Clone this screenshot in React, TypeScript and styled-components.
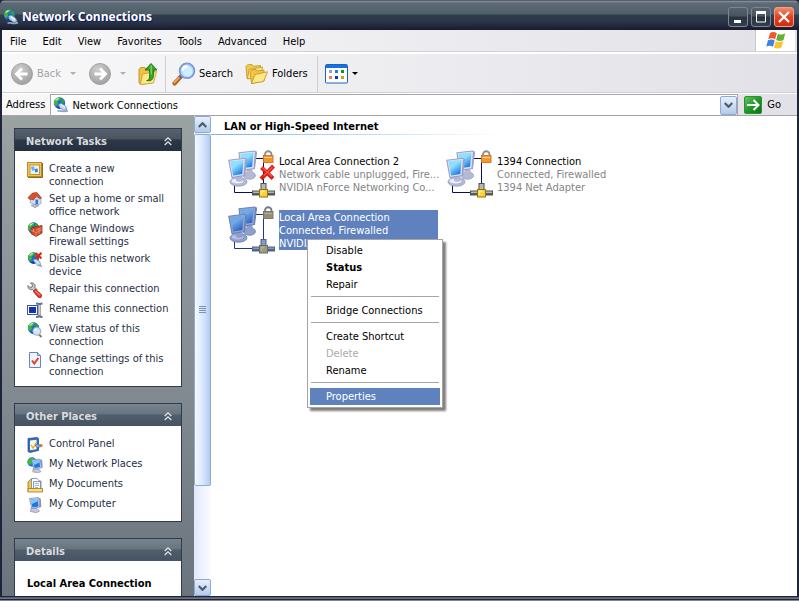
import React from "react";
import styled, { createGlobalStyle, css } from "styled-components";

const Global = createGlobalStyle`
  *, *::before, *::after { box-sizing: border-box; }
  html, body { margin: 0; height: 100%; }
  body {
    font-family: "DejaVu Sans Condensed", "Noto Sans", sans-serif;
    font-size: 11px;
    line-height: 13px;
    color: #000;
    overflow: hidden;
  }
  button, input {
    font: inherit;
    color: inherit;
    border: 0;
    padding: 0;
    margin: 0;
    background: none;
  }
  svg { display: block; flex: none; }
  ul, h2, h3, p { margin: 0; padding: 0; font: inherit; list-style: none; }
  a { color: inherit; text-decoration: none; }
`;

/* ---------- icons ---------- */

const Globe = () => (
  <g>
    <circle cx="6.5" cy="6" r="5.7" fill="#2468d0" />
    <path d="M1 5C2 1.500 5 0 8 .5L7 3 4.500 4.500 5 7 3 9C1.500 8 .8 6.500 1 5Z" fill="#3eb83c" />
    <path d="M9 1.500l2.500 2-.5 3-2.500-1-1-2Z" fill="#2ca536" />
    <path d="M2 3.500C3 1.500 5 .7 6.500 1L4 3.500Z" fill="#c8f3a8" />
    <path d="M3 10.500a5.700 5.700 0 0 0 8.500-2L9 9Z" fill="#0c3a92" />
  </g>
);

const GlobeCable = () => (
  <svg width="16" height="16" viewBox="0 0 16 16" aria-hidden="true">
    <Globe />
    <path d="M5.500 7.500L8 6l4.500 3 1.500 3-3 1.500-4.500-3Z" fill="#c3d9ef" stroke="#64819f" strokeWidth=".7" />
    <path d="M4.500 14.300c3-1.600 5.500 1.400 10.500-.5M12 12l2.500 2" fill="none" stroke="#8ba6c6" strokeWidth="1.600" />
    <path d="M8 7.500l4 3" stroke="#fff" />
  </svg>
);

const Icon16 = ({ children }: { children: React.ReactNode }) => (
  <svg width="16" height="16" viewBox="0 0 16 16" aria-hidden="true">
    {children}
  </svg>
);

const Monitor = () => (
  <g>
    <path d="M4 11l6 .5 2.500 2.700-3 1.500-6-1.200Z" fill="#c3c6dc" stroke="#8a8eab" strokeWidth=".7" />
    <path d="M2.500 1.500L11.500.6l1.300 9.600-8 1.300Z" fill="#e3e7f4" stroke="#7e88a8" strokeWidth=".8" />
    <path d="M3.700 2.500l7-.7.9 7.600-6.200 1Z" fill="#1f74e0" />
    <path d="M3.700 2.500l7-.7.3 2.500-6.700 3Z" fill="#7fc8ff" />
    <path d="M12 .8l1.800 1 .5 8-1.500.7Z" fill="#8b8fb0" />
  </g>
);

const IconCreate = () => (
  <Icon16>
    <rect x=".5" y=".5" width="14" height="14" fill="#f0c455" stroke="#b98a2a" />
    <rect x="3" y="3" width="9.500" height="9.500" fill="#e9f3fb" stroke="#c29532" />
    <path d="M4 5l3-.8.5 4-2.500.5Z" fill="#62aef0" />
    <path d="M7.500 7l3-.6.6 3.400-2.800.6Z" fill="#3f7fd6" />
    <path d="M15.500 1v14.500H1" fill="none" stroke="#8c6a22" />
  </Icon16>
);
const IconHome = () => (
  <Icon16>
    <path d="M4 13.500l4-1.500 4 1.500-4 2.200Z" fill="#b9bccb" stroke="#85889a" strokeWidth=".6" />
    <path d="M3 6l8-1 3 1v5.500l-4 1.500-6.500-2Z" fill="#cfe1f8" stroke="#8495b5" strokeWidth=".7" />
    <path d="M8.500 7.500h2.600V12l-2.600.5Z" fill="#3274cf" />
    <path d="M1 5.500L5.500 1 10 .5 14.500 6l-2 .8L9.500 4 6.500 8 2 7Z" fill="#d8532a" stroke="#93341a" strokeWidth=".6" />
  </Icon16>
);
const IconFirewall = () => (
  <Icon16>
    <Globe />
    <path d="M4 6l11-2.500V11L9 14.500 4 11.500Z" fill="#d4482a" stroke="#8f2613" strokeWidth=".8" />
    <path d="M4 8.500l5 2 6-2.700M6.500 7v2.500M12 6v3M9 10.500v4M9 8l6-2.300M12 9.500V12" fill="none" stroke="#f3a180" strokeWidth=".7" />
  </Icon16>
);
const IconDisable = () => (
  <Icon16>
    <Globe />
    <path d="M6 8l3-1 4 3 .5 3-3 .5Z" fill="#cfe0f2" stroke="#6b88a8" strokeWidth=".7" />
    <path d="M11 13l4 1.500" stroke="#8ca6c6" strokeWidth="1.500" />
    <path d="M8.500 1l6 5.500M14.500.8L8.500 6.500" stroke="#e2250c" strokeWidth="2.200" />
  </Icon16>
);
const IconRepair = () => (
  <Icon16>
    <path d="M1 3.500L3 5.500l2-.5.500-2L3.500 1C6.500.3 8.800 2.500 8 5.500l2 2-2 2.500-2.500-2.500C2.500 8.300.4 6 1 3.500Z" fill="#c6c6ca" stroke="#65656c" strokeWidth=".9" />
    <path d="M8.300 7l6.500 6-.8 2.500-2.600-.1L6.300 9.500Z" fill="#e33a1e" stroke="#9c210f" strokeWidth=".8" />
    <path d="M8.500 9l4.500 4.500" stroke="#ffab93" />
  </Icon16>
);
const IconRename = () => (
  <Icon16>
    <rect x=".5" y="3.500" width="10" height="9" fill="#fff" stroke="#4a5680" />
    <rect x="2" y="5" width="7" height="6" fill="#0a34bd" />
    <path d="M9 1.500c2 0 3 .5 3.500 1 .5-.5 1.500-1 3-1M12.500 2v12M9 15c2 0 3-.5 3.500-1 .5.500 1.500 1 3 1" fill="none" stroke="#68738e" strokeWidth="2.200" />
    <path d="M12.500 3v10" stroke="#d3d8e8" strokeWidth=".9" />
  </Icon16>
);
const IconStatus = () => (
  <Icon16>
    <Globe />
    <path d="M12 12.500l2.500 2.500" stroke="#9a6c3a" strokeWidth="1.800" />
    <circle cx="9.800" cy="9.300" r="4" fill="#c9e9fb" stroke="#8fa9bd" />
    <path d="M7.500 9a2.500 2.500 0 0 1 2.500-2" fill="none" stroke="#fff" strokeWidth="1.200" />
  </Icon16>
);
const IconSettings = () => (
  <Icon16>
    <path d="M2.500.5h8l3 3v12h-11Z" fill="#eef4ff" stroke="#6885bd" />
    <path d="M10.500.5v3h3" fill="#c2d4f2" stroke="#6885bd" />
    <path d="M5 8.500L7.300 11.500l4-5.500" fill="none" stroke="#e7401c" strokeWidth="2" />
  </Icon16>
);
const IconControl = () => (
  <Icon16>
    <path d="M1 1.500l9-1 1.500 1v12L3 15.500l-2-1Z" fill="#2c6fca" stroke="#1e4688" strokeWidth=".7" />
    <path d="M3 3.500l6.500-.8v9.500L3 13.300Z" fill="#fff8d8" />
    <path d="M4 8l2 3 3-5" fill="none" stroke="#e2a52c" strokeWidth="1.300" />
    <path d="M8 8.500l3-2v1.300h2.500V10H11v1.300Z" fill="#8ab0e6" stroke="#315b9f" strokeWidth=".6" />
    <circle cx="14" cy="8.500" r="1.600" fill="#e2703a" />
  </Icon16>
);
const IconPlaces = () => (
  <Icon16>
    <circle cx="5" cy="5" r="4.700" fill="#2f78d8" />
    <path d="M.5 5C1 2 3 .3 6 .5L7 3 4 7 2 8Z" fill="#42b83e" />
    <g transform="translate(2.500 1.500) scale(.92)">
      <Monitor />
    </g>
  </Icon16>
);
const IconDocs = () => (
  <Icon16>
    <path d="M1 5l3-3h3l1 2h6v10.500H1Z" fill="#f1c546" stroke="#9a7420" strokeWidth=".8" />
    <path d="M4.500 1.500H10l2 2v8H4.500Z" fill="#fff" stroke="#6f86b4" strokeWidth=".8" />
    <path d="M6.500 4.500h7v8h-7Z" fill="#f2f7ff" stroke="#6f86b4" strokeWidth=".8" />
    <path d="M8 6.500h4M8 8.500h4M8 10.500h3" stroke="#8ea9d6" strokeWidth=".8" />
    <path d="M1 11.500h14.500v3.500H1Z" fill="#f9dd7a" stroke="#9a7420" strokeWidth=".8" />
  </Icon16>
);
const IconComputer = () => (
  <Icon16>
    <Monitor />
  </Icon16>
);

const RoundArrow = ({ back }: { back?: boolean }) => (
  <svg width="24" height="24" viewBox="0 0 24 24" aria-hidden="true">
    <defs>
      <radialGradient id={back ? "rb" : "rf"} cx=".4" cy=".3" r=".8">
        <stop offset="0" stopColor="#cfcfcf" />
        <stop offset="1" stopColor="#9b9b9b" />
      </radialGradient>
    </defs>
    <circle cx="12" cy="12" r="10.500" fill={`url(#${back ? "rb" : "rf"})`} stroke="#a3a3a3" />
    <path
      d={back ? "M12 6.500L6.500 12l5.500 5.500M7 12h10.500" : "M12 6.500l5.500 5.500-5.500 5.500M17 12H6.500"}
      fill="none"
      stroke="#fff"
      strokeWidth="2.800"
    />
  </svg>
);

const IconUp = () => (
  <svg width="20" height="24" viewBox="0 0 20 24" aria-hidden="true">
    <path d="M1 7.500l1.500-2H7l1 1.500h8.500v3l-3 11L3 22.500 1 21Z" fill="#f0c240" stroke="#c2902a" strokeWidth=".9" />
    <path d="M4.500 12l14-2.500-3 11.500L2.500 22.500Z" fill="#fde88c" stroke="#d3a335" strokeWidth=".9" />
    <path d="M8.500 18.500c3 0 3.500-2.500 3-10.500H7l6-6.500L19 8h-3.500c.4 8-.5 12-7 10.500Z" fill="#35a62c" stroke="#17701a" strokeWidth=".9" />
    <path d="M13.200 3.500v9" stroke="#86dc6c" strokeWidth="1.200" />
  </svg>
);

const IconSearch = () => (
  <svg width="24" height="24" viewBox="0 0 24 24" aria-hidden="true">
    <path d="M9 14.500L2.500 21.500" stroke="#b86524" strokeWidth="4.200" strokeLinecap="round" />
    <path d="M8.500 14L2.500 20.500" stroke="#f7a75c" strokeWidth="1.800" strokeLinecap="round" />
    <path d="M10 12.500L7.500 15.500" stroke="#5968a0" strokeWidth="3" />
    <circle cx="15" cy="8.800" r="7.400" fill="#a8dcfa" stroke="#8197cf" strokeWidth="1.700" />
    <circle cx="15.500" cy="9.500" r="5" fill="#cdeeff" />
    <path d="M10.500 8c.6-2.500 2.500-3.600 4.500-3.600" fill="none" stroke="#fff" strokeWidth="2.200" strokeLinecap="round" />
  </svg>
);

const IconFolders = () => (
  <svg width="24" height="24" viewBox="0 0 24 24" aria-hidden="true">
    <g stroke="#c99727" strokeWidth=".9" strokeLinejoin="round">
      <path d="M2 16.500L1 4.500 2.500 2.800l4.500-.3L8.500 4.300l7-.8v10Z" fill="#f2cb4c" />
      <path d="M2.500 17L4 7.500 17.500 5l-2 9Z" fill="#fdeb98" />
      <path d="M6.500 21.500L5 9.500 6.500 8l4.500-.5L12.500 9l6.500-1v11Z" fill="#f0c544" />
      <path d="M6.500 21.500l3.500-9L22.500 9.800l-4 9.700Z" fill="#fde88a" />
    </g>
  </svg>
);

const IconViews = () => (
  <svg width="23" height="20" viewBox="0 0 23 20" aria-hidden="true">
    <rect x=".5" y=".5" width="22" height="18.500" rx="1" fill="#fff" stroke="#1464c8" />
    <rect x="1" y="1" width="21" height="3" fill="#1a70dc" />
    <rect x="4" y="6" width="3" height="3" fill="#9a9ccc" />
    <rect x="10" y="6" width="3" height="3" fill="#1e7de0" />
    <rect x="16" y="6" width="3" height="3" fill="#0c9a1c" />
    <rect x="4" y="12" width="3" height="3" fill="#fb7a50" />
    <rect x="10" y="12" width="3" height="3" fill="#12379e" />
    <rect x="16" y="12" width="3" height="3" fill="#d0a012" />
  </svg>
);

const Caret = ({ color }: { color: string }) => (
  <svg width="6" height="3" viewBox="0 0 6 3" aria-hidden="true">
    <path d="M0 0h6L3 3Z" fill={color} />
  </svg>
);

const Chevron = ({ up }: { up?: boolean }) => (
  <svg width="9" height="6" viewBox="0 0 9 6" aria-hidden="true">
    <path d={up ? "M.7 5L4.500 1.200 8.300 5" : "M.7 1L4.500 4.800 8.300 1"} fill="none" stroke="#4b5a6e" strokeWidth="2.200" />
  </svg>
);

const DoubleChevron = () => (
  <svg width="8" height="9" viewBox="0 0 8 9" aria-hidden="true">
    <path d="M.7 4L4 .9 7.300 4M.7 8L4 4.900 7.300 8" fill="none" stroke="#e4e6e8" strokeWidth="1.300" />
  </svg>
);

const WindowsFlag = () => (
  <svg width="20" height="19" viewBox="0 0 20 19" aria-hidden="true">
    <path d="M4 2c2.500-1.500 4.500-1.300 6.800.2L9 8.500C7 7 4.800 7 2.300 8.200Z" fill="#ee5a2a" />
    <path d="M11.800 2.700c2.300 1.200 4.500 1.200 7.400-.2L17.500 9c-2.700 1.300-5 1.200-7.300 0Z" fill="#62b235" />
    <path d="M2 9.300c2.500-1.200 4.700-1.200 6.700.3L7 15.800c-2-1.400-4.300-1.400-6.800-.2Z" fill="#3d83e0" />
    <path d="M9.800 10.200c2.300 1.200 4.700 1.200 7.400-.1l-1.800 6.500c-2.500 1.300-5 1.300-7.400 0Z" fill="#fbc32c" />
  </svg>
);

const IconGo = () => (
  <svg width="18" height="18" viewBox="0 0 18 18" aria-hidden="true">
    <defs>
      <linearGradient id="go" x1="0" y1="0" x2="1" y2="1">
        <stop offset="0" stopColor="#6cc468" />
        <stop offset=".5" stopColor="#1f9a26" />
        <stop offset="1" stopColor="#0a7012" />
      </linearGradient>
    </defs>
    <rect x=".5" y=".5" width="17" height="17" rx="1.500" fill="url(#go)" stroke="#2f8f36" />
    <path d="M3 9h11M9.500 4l5 5-5 5" fill="none" stroke="#fff" strokeWidth="2" />
  </svg>
);

const ConnectionIcon = ({ selected, broken }: { selected?: boolean; broken?: boolean }) => {
  const p = selected
    ? { a: "#6fa9e6", b: "#2f66c4", frame: "#6b82b8", bezel: "#93a5d2", base: "#8e9fcb", baseHi: "#b4c1e2", lock: "#9a8d78", lockEdge: "#7a7468", lockHi: "#b8ae9b", shackle: "#6f7890", wire: "#23357e", hub: "#4c6288", hubLight: "#8199c4", core: "#9c9c7c", coreEdge: "#686c60", coreHi: "#b4b49c" }
    : { a: "#8fe0ff", b: "#1f7ce8", frame: "#98a0c4", bezel: "#dde1f2", base: "#b5b9d3", baseHi: "#eceef8", lock: "#f3962d", lockEdge: "#d0741c", lockHi: "#ffd089", shackle: "#8d8d90", wire: "#0b0b60", hub: "#4f5452", hubLight: "#b4bab4", core: "#fccf3c", coreEdge: "#9a7208", coreHi: "#ffef9a" };
  const id = selected ? "scr-selected" : "scr-normal";
  return (
    <svg width="48" height="48" viewBox="0 0 48 48" aria-hidden="true">
      <defs>
        <linearGradient id={id} x1="0" y1="0" x2=".6" y2="1">
          <stop offset="0" stopColor={p.a} />
          <stop offset=".45" stopColor={p.a} />
          <stop offset="1" stopColor={p.b} />
        </linearGradient>
      </defs>
      <path d="M26 8.500h9.500V34M6.500 34v8.500H25" fill="none" stroke={p.wire} />
      <ellipse cx="21.500" cy="25.500" rx="6" ry="3.800" fill={p.base} stroke={p.frame} strokeWidth=".8" />
      <path d="M18 18.500h6l1.500 6-6 1.500Z" fill={p.base} />
      <path d="M11 2.800L26.500 1l2 1L26.500 18.500 13 20.500Z" fill={p.bezel} stroke={p.frame} strokeWidth="1.100" />
      <path d="M12.300 4l13.200-1.500-1.400 14.300L14 18.200Z" fill={`url(#${id})`} />
      <path d="M27 2l1.500.3-2 16-1 .2Z" fill={p.frame} />
      <ellipse cx="10.500" cy="31.800" rx="8.500" ry="4.400" fill={p.base} stroke={p.frame} strokeWidth=".9" />
      <ellipse cx="9.500" cy="31" rx="6" ry="2.600" fill={p.baseHi} />
      <path d="M7.500 25.500h6.500l1.500 4.500c-2 2-5 2-7.500 1Z" fill={p.base} />
      <path d="M.8 10.300l15.700-2 2 1.200-2 16-12.500 2Z" fill={p.bezel} stroke={p.frame} strokeWidth="1.100" />
      <path d="M2.300 11.600l13.300-1.700-1.300 14-9.100 1.500Z" fill={`url(#${id})`} />
      <path d="M17 9.400l1.500.3-2 16-1 .2Z" fill={p.frame} />
      <path d="M37 6V4.500a3 3 0 0 1 6.500 0V6" fill="none" stroke={p.shackle} strokeWidth="1.800" />
      <rect x="35.500" y="5.500" width="9.500" height="7" fill={p.lock} stroke={p.lockEdge} strokeWidth=".9" />
      <path d="M36.500 7.500h7.500" stroke={p.lockHi} />
      <rect x="33" y="33.500" width="5" height="6" fill={p.hubLight} stroke={p.hub} />
      <rect x="24.500" y="41" width="22" height="4" fill={p.hubLight} stroke={p.hub} />
      <path d="M25 44h21" stroke={p.hub} strokeWidth="1.800" />
      <rect x="31.500" y="39.500" width="8" height="7.500" fill={p.core} stroke={p.coreEdge} />
      <path d="M33.500 45v-3.500h3" fill="none" stroke={p.coreHi} strokeWidth="1.300" />
      {broken && <path d="M33.500 17.500L45 28.500M45.500 16L33 29" stroke="#d9221a" strokeWidth="4" />}
      {broken && <path d="M34.500 17.500l9.500 9M44.500 17L36 25.500" stroke="#f5533c" strokeWidth="1.400" />}
    </svg>
  );
};

/* ---------- frame ---------- */

const Frame = styled.div`
  display: flex;
  flex-direction: column;
  height: 100vh;
  background: #20243a;
`;
const TitleBar = styled.header`
  display: flex;
  align-items: center;
  gap: 3px;
  flex: none;
  height: 30px;
  padding: 4px 5px 0 3px;
  border-radius: 5px 5px 0 0;
  color: #fff;
  background: linear-gradient(#20263a 0, #8b95a2 1px, #5e6b77 3px, #4f5e69 14px, #303e4f 15px, #2a3447 22px, #171c2e 30px);
`;
const Title = styled.h1`
  flex: 1;
  margin: 0;
  font-family: "Open Sans", "Noto Sans", sans-serif;
  font-size: 12px;
  line-height: 16px;
  font-weight: 700;
  text-shadow: 1px 1px 0 #10206a;
`;
const Caption = styled.div`
  display: flex;
  gap: 3px;
`;
const CaptionButton = styled.button<{ $close?: boolean }>`
  display: grid;
  place-items: center;
  width: 20px;
  height: 20px;
  border: 1px solid ${(p) => (p.$close ? "#f2a08c" : "#7d8794")};
  border-radius: 3px;
  background: ${(p) =>
    p.$close
      ? "linear-gradient(#f08a6c, #e8401c 50%, #d22c0c)"
      : "linear-gradient(#55616d, #48545f 45%, #27323f 50%, #333f4e)"};
`;
const Client = styled.div`
  display: flex;
  flex-direction: column;
  flex: 1;
  min-height: 0;
  margin: 0 2px;
  background: #fff;
`;
const BottomEdge = styled.div`
  flex: none;
  height: 5px;
  border-top: 1px solid #20243a;
  border-bottom: 1px solid #85868c;
  background: linear-gradient(#4a5568, #6a7686 50%, #20243a 50%);
`;

const bar = css`
  display: flex;
  flex: none;
  background: linear-gradient(90deg, #f8f8f9, #e2e1e7);
`;
const MenuBar = styled.nav`
  ${bar}
  height: 24px;
  border-bottom: 2px solid #fff;
  box-shadow: inset 0 -1px 0 #d0cfd3;
`;
const MenuItems = styled.div`
  display: flex;
  flex: 1;
  align-items: center;
`;
const MenuButton = styled.button`
  padding: 0 8px;
`;
const Brand = styled.div`
  display: grid;
  place-items: center;
  width: 42px;
  margin-bottom: 1px;
  border-left: 1px solid #c9c8cc;
  border-right: 2px solid #e2e1e7;
  background: #fff;
`;
const ToolBar = styled.div`
  ${bar}
  align-items: center;
  height: 40px;
  padding-left: 8px;
  border-bottom: 1px solid #fff;
  box-shadow: inset 0 -1px 0 #d0cfd3;
`;
const Tool = styled.button<{ $gap?: number; $after?: number }>`
  display: flex;
  align-items: center;
  gap: ${(p) => p.$gap ?? 3}px;
  margin-right: ${(p) => p.$after ?? 0}px;
  &:disabled { color: #a3a2a5; }
`;
const Divider = styled.span<{ $after: number }>`
  width: 1px;
  height: 36px;
  margin-right: ${(p) => p.$after}px;
  background: #cfced2;
`;
const AddressBar = styled.form`
  ${bar}
  align-items: center;
  height: 22px;
  padding-left: 4px;
  border-bottom: 1px solid #a6a5aa;
`;
const Combo = styled.div`
  display: flex;
  align-items: center;
  flex: 1;
  height: 21px;
  margin: 0 6px 0 5px;
  padding-left: 2px;
  gap: 3px;
  border: 1px solid #a6a5aa;
  border-bottom: 0;
  background: #fff;
`;
const AddressInput = styled.input`
  flex: 1;
  min-width: 0;
  outline: 0;
`;
const blueButton = css`
  display: grid;
  place-items: center;
  flex: none;
  width: 17px;
  border: 1px solid #8fa9cf;
  border-radius: 2px;
  background: linear-gradient(#e6f0fd, #b3cbe9);
`;
const DropButton = styled.button`
  ${blueButton}
  height: 19px;
`;
const GoButton = styled.button`
  display: flex;
  align-items: center;
  gap: 5px;
  margin-right: 16px;
`;

/* ---------- body ---------- */

const Body = styled.div`
  display: flex;
  flex: 1;
  min-height: 0;
`;
const Sidebar = styled.aside`
  display: flex;
  flex-direction: column;
  flex: none;
  gap: 16px;
  width: 192px;
  padding: 12px;
  overflow: hidden;
  background: linear-gradient(#9aa2a2, #868e94 50%, #6b747d);
`;
const Panel = styled.section`
  flex: none;
  border: 1px solid #303b4e;
  background: #fff;
  color: #1f2f45;
`;
const PanelHead = styled.h2<{ $strong?: boolean }>`
  display: flex;
  align-items: center;
  justify-content: space-between;
  height: 22px;
  padding: 3px 9px 0 11px;
  font-weight: 700;
  color: #d9dcdf;
  background: ${(p) =>
    p.$strong
      ? "linear-gradient(#58636f, #49545f 45%, #2c3747 50%, #263041)"
      : "linear-gradient(#77838e, #68747f 45%, #505d6b 50%, #465362)"};
`;
const PanelBody = styled.ul`
  display: grid;
  gap: 4px;
  padding: 11px 12px 8px;
`;
const Task = styled.li`
  min-height: 16px;
`;
const TaskLink = styled.a`
  display: flex;
  align-items: flex-start;
  gap: 6px;
`;
const DetailName = styled.p`
  height: 48px;
  padding: 16px 12px 0;
  font-weight: 700;
  color: #000;
`;

const Scroll = styled.div`
  display: flex;
  flex-direction: column;
  flex: none;
  width: 17px;
  background: linear-gradient(90deg, #e0e9fb, #fbfcff);
`;
const ScrollButton = styled.button`
  ${blueButton}
  height: 17px;
`;
const Track = styled.div`
  flex: 1;
  padding-top: 1px;
`;
const Thumb = styled.div`
  display: grid;
  place-content: center;
  gap: 1px;
  height: 79%;
  border: 1px solid #8fabd4;
  border-radius: 2px;
  background: linear-gradient(90deg, #f4f9ff, #d9e8ff 50%, #b4cbee);
`;
const Grip = styled.span`
  width: 7px;
  height: 1px;
  background: #7d93b4;
`;

const Main = styled.main`
  flex: 1;
  min-width: 0;
`;
const GroupTitle = styled.h2`
  height: 19px;
  padding: 4px 13px 0;
  font-weight: 700;
  background: linear-gradient(90deg, #7db2e2, #fff 290px) bottom / 100% 1px no-repeat;
`;
const Connections = styled.ul`
  display: grid;
  grid-template-columns: repeat(auto-fill, 218px);
  grid-auto-rows: 56px;
  padding: 15px 17px;
`;
const Connection = styled.li`
  position: relative;
  display: flex;
  align-items: flex-start;
  gap: 3px;
`;
const Lines = styled.div<{ $selected?: boolean }>`
  flex: 1;
  min-width: 0;
  margin: 4px 8px 0 0;
  padding-top: 1px;
  color: ${(p) => (p.$selected ? "#fff" : "#858585")};
  background: ${(p) => (p.$selected ? "#5f82bf" : "none")};
`;
const Line = styled.p<{ $name?: boolean }>`
  white-space: nowrap;
  color: ${(p) => (p.$name ? "#000" : "inherit")};
`;

const Menu = styled.div`
  position: absolute;
  z-index: 1;
  left: 79px;
  top: 33px;
  width: 136px;
  padding: 2px;
  border: 1px solid #a5a5a7;
  background: #fff;
  box-shadow: 3px 3px 2px rgba(0, 0, 0, 0.5);
`;
const MenuEntry = styled.button<{ $bold?: boolean; $active?: boolean }>`
  display: block;
  width: 100%;
  height: 17px;
  padding-left: 16px;
  text-align: left;
  font-weight: ${(p) => (p.$bold ? 700 : 400)};
  color: ${(p) => (p.$active ? "#fff" : "#000")};
  background: ${(p) => (p.$active ? "#5f82bf" : "none")};
  &:disabled { color: #aaa; }
`;
const MenuRule = styled.hr`
  height: 1px;
  margin: 3px 1px 5px;
  border: 0;
  background: #a5a5a7;
`;

const tasks = [
  { icon: <IconCreate />, label: "Create a new connection" },
  { icon: <IconHome />, label: "Set up a home or small office network" },
  { icon: <IconFirewall />, label: "Change Windows Firewall settings" },
  { icon: <IconDisable />, label: "Disable this network device" },
  { icon: <IconRepair />, label: "Repair this connection" },
  { icon: <IconRename />, label: "Rename this connection" },
  { icon: <IconStatus />, label: "View status of this connection" },
  { icon: <IconSettings />, label: "Change settings of this connection" },
];
const places = [
  { icon: <IconControl />, label: "Control Panel" },
  { icon: <IconPlaces />, label: "My Network Places" },
  { icon: <IconDocs />, label: "My Documents" },
  { icon: <IconComputer />, label: "My Computer" },
];

const TaskList = ({ items }: { items: typeof tasks }) => (
  <PanelBody>
    {items.map((t) => (
      <Task key={t.label}>
        <TaskLink href="#">
          {t.icon}
          <span>{t.label}</span>
        </TaskLink>
      </Task>
    ))}
  </PanelBody>
);

export default function App() {
  return (
    <>
      <Global />
      <Frame>
        <TitleBar>
          <GlobeCable />
          <Title>Network Connections</Title>
          <Caption>
            <CaptionButton aria-label="Minimize">
              <svg width="14" height="14"><rect x="3" y="10" width="7" height="3" fill="#fff" /></svg>
            </CaptionButton>
            <CaptionButton aria-label="Maximize">
              <svg width="12" height="12"><path d="M1 2h10M1.500 1v10h9V1" fill="none" stroke="#fff" /><path d="M1 1.500h10" stroke="#fff" strokeWidth="3" /></svg>
            </CaptionButton>
            <CaptionButton $close aria-label="Close">
              <svg width="12" height="12"><path d="M1 1l10 10M11 1L1 11" stroke="#fff" strokeWidth="2.400" /></svg>
            </CaptionButton>
          </Caption>
        </TitleBar>
        <Client>
          <MenuBar>
            <MenuItems>
              {["File", "Edit", "View", "Favorites", "Tools", "Advanced", "Help"].map((m) => (
                <MenuButton key={m}>{m}</MenuButton>
              ))}
            </MenuItems>
            <Brand><WindowsFlag /></Brand>
          </MenuBar>
          <ToolBar>
            <Tool disabled $after={9}><RoundArrow back />Back</Tool>
            <Tool disabled aria-label="Back history" $after={12}><Caret color="#b3b0a8" /></Tool>
            <Tool disabled aria-label="Forward" $after={8}><RoundArrow /></Tool>
            <Tool disabled aria-label="Forward history" $after={12}><Caret color="#b3b0a8" /></Tool>
            <Tool aria-label="Up" $after={7}><IconUp /></Tool>
            <Divider $after={6} />
            <Tool $after={12}><IconSearch />Search</Tool>
            <Tool $after={9}><IconFolders />Folders</Tool>
            <Divider $after={7} />
            <Tool $gap={4} aria-label="Views"><IconViews /><Caret color="#000" /></Tool>
          </ToolBar>
          <AddressBar>
            <label htmlFor="address">Address</label>
            <Combo>
              <GlobeCable />
              <AddressInput id="address" defaultValue="Network Connections" />
              <DropButton type="button" aria-label="Show addresses"><Chevron /></DropButton>
            </Combo>
            <GoButton type="button"><IconGo />Go</GoButton>
          </AddressBar>
          <Body>
            <Sidebar>
              <Panel>
                <PanelHead $strong>Network Tasks<DoubleChevron /></PanelHead>
                <TaskList items={tasks} />
              </Panel>
              <Panel>
                <PanelHead>Other Places<DoubleChevron /></PanelHead>
                <TaskList items={places} />
              </Panel>
              <Panel>
                <PanelHead>Details<DoubleChevron /></PanelHead>
                <DetailName>Local Area Connection</DetailName>
              </Panel>
            </Sidebar>
            <Scroll>
              <ScrollButton aria-label="Scroll up"><Chevron up /></ScrollButton>
              <Track><Thumb><Grip /><Grip /><Grip /><Grip /></Thumb></Track>
              <ScrollButton aria-label="Scroll down"><Chevron /></ScrollButton>
            </Scroll>
            <Main>
              <GroupTitle>LAN or High-Speed Internet</GroupTitle>
              <Connections>
                <Connection>
                  <ConnectionIcon broken />
                  <Lines>
                    <Line $name>Local Area Connection 2</Line>
                    <Line>Network cable unplugged, Fire...</Line>
                    <Line>NVIDIA nForce Networking Co...</Line>
                  </Lines>
                </Connection>
                <Connection>
                  <ConnectionIcon />
                  <Lines>
                    <Line $name>1394 Connection</Line>
                    <Line>Connected, Firewalled</Line>
                    <Line>1394 Net Adapter</Line>
                  </Lines>
                </Connection>
                <Connection>
                  <ConnectionIcon selected />
                  <Lines $selected>
                    <Line>Local Area Connection</Line>
                    <Line>Connected, Firewalled</Line>
                    <Line>NVIDIA nForce Networking Co...</Line>
                  </Lines>
                  <Menu>
                    <MenuEntry>Disable</MenuEntry>
                    <MenuEntry $bold>Status</MenuEntry>
                    <MenuEntry>Repair</MenuEntry>
                    <MenuRule />
                    <MenuEntry>Bridge Connections</MenuEntry>
                    <MenuRule />
                    <MenuEntry>Create Shortcut</MenuEntry>
                    <MenuEntry disabled>Delete</MenuEntry>
                    <MenuEntry>Rename</MenuEntry>
                    <MenuRule />
                    <MenuEntry $active>Properties</MenuEntry>
                  </Menu>
                </Connection>
              </Connections>
            </Main>
          </Body>
        </Client>
        <BottomEdge />
      </Frame>
    </>
  );
}
